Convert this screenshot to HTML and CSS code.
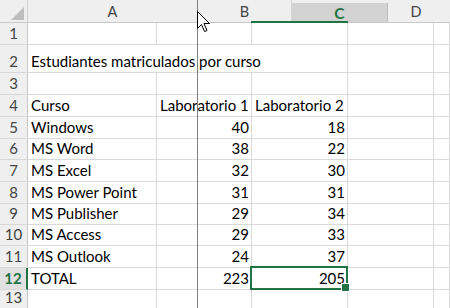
FILE: index.html
```html
<!DOCTYPE html>
<html lang="es">
<head>
<meta charset="utf-8">
<title>Hoja de cálculo</title>
<link rel="stylesheet" href="styles.css">
</head>
<body>
<div class="sheet">
  <div class="colheads">
    <div class="corner">
      <svg class="corner-tri" width="13" height="13" viewBox="0 0 13 13"><path d="M13 0 V13 H0 Z" fill="#bdbdbd"/></svg>
    </div>
    <div class="colhead col-a">A</div>
    <div class="colhead col-b">B</div>
    <div class="colhead col-c sel">C</div>
    <div class="colhead col-d">D</div>
  </div>
  <div class="grid">
    <div class="rh">1</div><div class="c"></div><div class="c"></div><div class="c"></div><div class="c"></div><div class="c"></div>
    <div class="rh">2</div><div class="c span3">Estudiantes matriculados por curso</div><div class="c"></div><div class="c"></div>
    <div class="rh">3</div><div class="c"></div><div class="c"></div><div class="c"></div><div class="c"></div><div class="c"></div>
    <div class="rh">4</div><div class="c">Curso</div><div class="c">Laboratorio 1</div><div class="c">Laboratorio 2</div><div class="c"></div><div class="c"></div>
    <div class="rh">5</div><div class="c">Windows</div><div class="c num">40</div><div class="c num">18</div><div class="c"></div><div class="c"></div>
    <div class="rh">6</div><div class="c">MS Word</div><div class="c num">38</div><div class="c num">22</div><div class="c"></div><div class="c"></div>
    <div class="rh">7</div><div class="c">MS Excel</div><div class="c num">32</div><div class="c num">30</div><div class="c"></div><div class="c"></div>
    <div class="rh">8</div><div class="c">MS Power Point</div><div class="c num">31</div><div class="c num">31</div><div class="c"></div><div class="c"></div>
    <div class="rh">9</div><div class="c">MS Publisher</div><div class="c num">29</div><div class="c num">34</div><div class="c"></div><div class="c"></div>
    <div class="rh">10</div><div class="c">MS Access</div><div class="c num">29</div><div class="c num">33</div><div class="c"></div><div class="c"></div>
    <div class="rh">11</div><div class="c">MS Outlook</div><div class="c num">24</div><div class="c num">37</div><div class="c"></div><div class="c"></div>
    <div class="rh rh-sel">12</div><div class="c">TOTAL</div><div class="c num">223</div><div class="c num active">205</div><div class="c"></div><div class="c"></div>
    <div class="rh">13</div><div class="c"></div><div class="c"></div><div class="c"></div><div class="c"></div><div class="c"></div>
  </div>
  <div class="col-underline"></div>
  <div class="drag-line"></div>
  <svg class="cursor" width="13" height="21" viewBox="0 0 13 21"><path d="M0.5 0.5 V17.5 L4.5 13.5 L7.5 20.5 L10 19.5 L7 12.5 H12.5 Z" fill="#fff" stroke="#000" stroke-width="1" stroke-linejoin="miter"/></svg>
</div>
</body>
</html>
```
FILE: styles.css
```css
* { box-sizing: border-box; }
html, body { margin: 0; padding: 0; background: #fff; }
body { width: 450px; height: 308px; overflow: hidden; }

.sheet {
  position: relative;
  width: 450px;
  height: 308px;
  overflow: hidden;
  font-family: "Lato", "Noto Sans", sans-serif;
  font-size: 15px;
  color: #000;
}

/* column headers */
.colheads {
  display: flex;
  height: 23px;
  background: #efefef;
  border-bottom: 1px solid #c8c8c8;
}
.corner {
  width: 28px;
  flex: none;
  border-right: 1px solid #d0d0d0;
  display: flex;
  align-items: flex-end;
  justify-content: flex-end;
  padding: 0 3px 2px 0;
}
.colhead {
  flex: none;
  display: flex;
  align-items: center;
  justify-content: center;
  color: #444;
  font-size: 14.5px;
  border-right: 1px solid #d4d4d4;
}
.col-a { width: 170px; }
.col-b { width: 94px; }
.col-c { width: 96px; }
.col-d { flex: 1; border-right: 0; padding-right: 6px; }
.colhead.sel {
  margin-top: 3px;
  background: #d3d3d3;
  color: #217346;
  font-weight: 700;
  font-size: 15.5px;
  border-right: 1px solid #bdbdbd;
}

/* cell grid */
.grid {
  display: grid;
  grid-template-columns: 28px 129px 95px 96px 86px 1fr;
  grid-template-rows: 22px 28px 22px 22px 22px 21px 22px 22px 21px 21px 22px 22px 19px;
}
.c, .rh {
  border-right: 1px solid #dadada;
  border-bottom: 1px solid #dadada;
  display: flex;
  align-items: flex-end;
  white-space: nowrap;
  line-height: 18px;
  padding: 0 2px 2px 3px;
  min-width: 0;
}
.span3 { grid-column: span 3; }
.num { justify-content: flex-end; padding-right: 2px; }
.rh {
  background: #efefef;
  border-right-color: #c8c8c8;
  border-bottom-color: #d8d8d8;
  justify-content: center;
  color: #444;
  padding: 0 0 2px 0;
}
.rh-sel {
  background: #e1e1e1;
  color: #217346;
  font-weight: 700;
  border-right: 2px solid #217346;
}

.active { position: relative; }
.active::after {
  content: "";
  position: absolute;
  left: -2px;
  top: -2px;
  right: -1px;
  bottom: -1px;
  border: 2px solid #217346;
}
.active::before {
  content: "";
  position: absolute;
  right: -3px;
  bottom: -3px;
  width: 7px;
  height: 7px;
  background: #217346;
  border: 1px solid #fff;
  z-index: 2;
}

/* overlays from the column resize drag */
.col-underline {
  position: absolute;
  left: 251px;
  top: 21px;
  width: 97px;
  height: 2px;
  background: #217346;
}
.drag-line {
  position: absolute;
  left: 197px;
  top: 0;
  width: 1px;
  height: 308px;
  background: #7d7d7d;
}
.cursor {
  position: absolute;
  left: 197px;
  top: 11px;
}
```
